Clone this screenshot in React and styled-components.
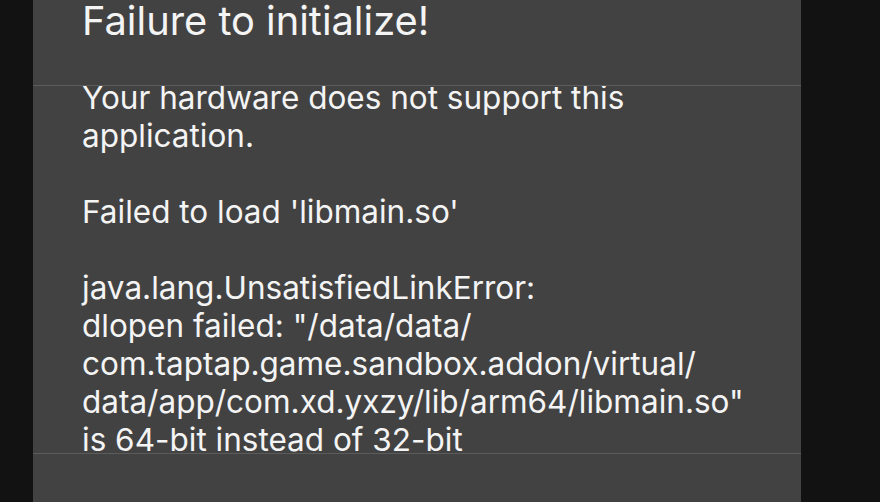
import React from "react";
import styled, { createGlobalStyle } from "styled-components";

const GlobalStyle = createGlobalStyle`
  html, body {
    margin: 0;
    padding: 0;
    background: #121212;
    height: 100%;
  }
  #root {
    height: 100%;
  }
`;

const Screen = styled.div`
  height: 100vh;
  display: flex;
  justify-content: flex-start;
  padding-left: 33px;
  background: #121212;
  font-family: Inter, "Noto Sans", "Liberation Sans", sans-serif;
  color: #f4f4f4;
`;

const Dialog = styled.div`
  width: 768px;
  height: 100%;
  background: #424242;
  display: flex;
  flex-direction: column;
`;

const Header = styled.div`
  height: 85px;
  flex-shrink: 0;
  border-bottom: 1px solid #5b5b5b;
  padding-left: 49px;
  box-sizing: content-box;
`;

const Title = styled.h1`
  margin: 0;
  font-size: 39.8px;
  font-weight: 400;
  line-height: 48px;
  margin-top: -3px;
`;

const Body = styled.div`
  height: 367px;
  overflow: hidden;
  border-bottom: 1px solid #5b5b5b;
  padding-left: 49px;
  padding-right: 30px;
`;

const Message = styled.p`
  margin: -7px 0 0;
  font-size: 31.5px;
  line-height: 38px;
  white-space: pre-line;
`;

const Footer = styled.div`
  flex: 1;
`;

const lines = [
  "Your hardware does not support this",
  "application.",
  "",
  "Failed to load 'libmain.so'",
  "",
  "java.lang.UnsatisfiedLinkError:",
  'dlopen failed: "/data/data/',
  "com.taptap.game.sandbox.addon/virtual/",
  'data/app/com.xd.yxzy/lib/arm64/libmain.so"',
  "is 64-bit instead of 32-bit",
];

export default function App() {
  return (
    <>
      <GlobalStyle />
      <Screen>
        <Dialog>
          <Header>
            <Title>Failure to initialize!</Title>
          </Header>
          <Body>
            <Message>{lines.join("\n")}</Message>
          </Body>
          <Footer />
        </Dialog>
      </Screen>
    </>
  );
}
